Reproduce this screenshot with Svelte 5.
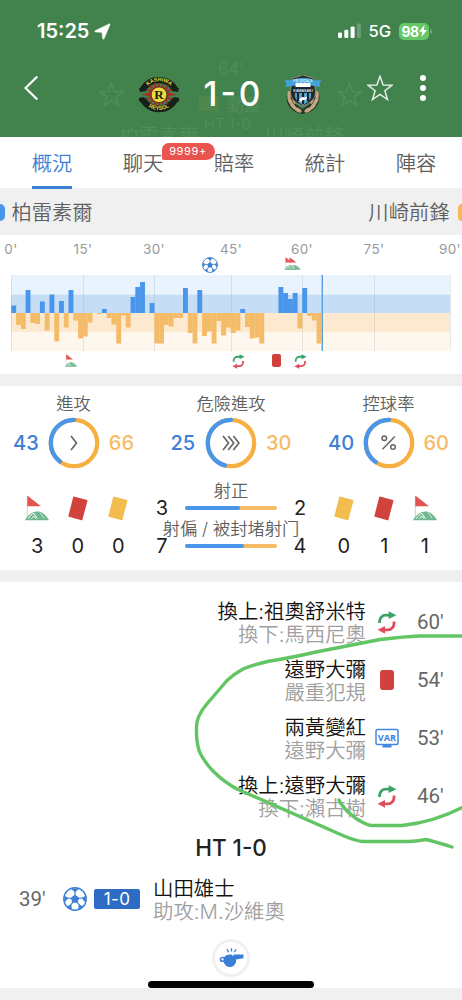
<script lang="ts">
  type Icon = 'sub' | 'red' | 'var';

  interface MatchEvent {
    title: string;
    detail: string;
    icon: Icon;
    minute: number;
  }

  const tabs = ['概況', '聊天', '賠率', '統計', '陣容'];
  let active = $state('概況');

  // x positions of the gridlines; the first half includes added time
  const ticks = [
    { label: "0'", x: 0 },
    { label: "15'", x: 72 },
    { label: "30'", x: 143 },
    { label: "45'", x: 220 },
    { label: "60'", x: 291 },
    { label: "75'", x: 363 },
    { label: "90'", x: 439 }
  ];

  // one value per minute, positive = home pressure, negative = away
  const momentum = [
    7.5, -12, -16, 23, -10, -11, 11.5, -17.5, 18.5, -28.5, 12, -14.5, 23, -7.5, -25.5,
    -23.5, -9.5, 0, -1, 4, -5, -11.5, -30.5, -2.5, -14.5, 16, 26, 31, 0, 10,
    -30.5, -30.5, -12, -13.5, -5, -5, 25, -20, -30.5, 23, -23, -18.5, -30.5, -8, -22.5,
    -14.5, -20, -17.5, 4, -14, -25.5, -24.5, -30.5, 0, 0, 0, 26, 20, 14, 20,
    -15.5, 25, -3, -7.5, -30.5
  ];
  const barWidth = 4.77;

  const rings = [
    { label: '進攻', home: 43, away: 66, symbol: '1' },
    { label: '危險進攻', home: 25, away: 30, symbol: '3' },
    { label: '控球率', home: 40, away: 60, symbol: '%' }
  ];

  const shots = [
    { label: '射正', home: 3, away: 2 },
    { label: '射偏 / 被封堵射门', home: 7, away: 4 }
  ];

  const homeCards = [
    { kind: 'corner', count: 3 },
    { kind: 'red', count: 0 },
    { kind: 'yellow', count: 0 }
  ];
  const awayCards = [
    { kind: 'yellow', count: 0 },
    { kind: 'red', count: 1 },
    { kind: 'corner', count: 1 }
  ];

  const events: MatchEvent[] = [
    { title: '換上:祖奧舒米特', detail: '換下:馬西尼奧', icon: 'sub', minute: 60 },
    { title: '遠野大彌', detail: '嚴重犯規', icon: 'red', minute: 54 },
    { title: '兩黃變紅', detail: '遠野大彌', icon: 'var', minute: 53 },
    { title: '換上:遠野大彌', detail: '換下:瀨古樹', icon: 'sub', minute: 46 }
  ];

  const circumference = 2 * Math.PI * 23.2;
</script>

{#snippet ball(size: number)}
  <svg width={size} height={size} viewBox="0 0 24 24">
    <circle cx="12" cy="12" r="11.2" fill="#fff" stroke="#3b7fd6" stroke-width="1.4" />
    <g fill="#3b7fd6">
      <path d="M12 7.8l4.2 3-1.6 4.9H9.4l-1.6-4.9z" />
      <path d="M7.6 1.6h8.8L12 5.2zM22.9 8.4l-.3 7.4-4-4.8zM1.1 8.4l.3 7.4 4-4.800zM20.600 19.200l-5.600 3.600.8-5.300zM3.400 19.200l5.600 3.600-.8-5.300z" />
    </g>
    <path d="M12 4v5M19.3 11l-4 .5M4.7 11l4 .5M16.5 18.3l-2.5-3.5M7.5 18.3l2.5-3.5" stroke="#3b7fd6" stroke-width="1.2" />
  </svg>
{/snippet}

{#snippet corner(width: number, height: number)}
  <svg {width} {height} viewBox="0 0 24 26">
    <path d="M2.3 1v22" stroke="#d3cfcd" stroke-width="1" />
    <path d="M2.3.5L16 11.2H2.3z" fill="#e25452" />
    <path d="M0 25.3C4 17 16 10.5 24 25.3z" fill="#6fb78e" />
    <path d="M3.5 23.6c1.5-3 3.5-4.7 5.5-5.2l3.5 5.2M6.5 23.6l2.3-2.6 2 2.6" fill="none" stroke="#fff" stroke-width="1" />
    <path d="M15 17.5l4 5.8" stroke="#d6eee0" stroke-width=".9" />
  </svg>
{/snippet}

{#snippet swap(size: number)}
  <svg width={size} height={size * 1.15} viewBox="0 0 20 23">
    <path d="M2.6 12V10A6 6 0 0 1 8.6 4.200H13" fill="none" stroke="#3da268" stroke-width="2.8" />
    <path d="M11.600.3l7.800 3.900L11.600 8z" fill="#3da268" />
    <path d="M17 10.600v2.200a6 6 0 0 1-6 6H7" fill="none" stroke="#dd4f5d" stroke-width="2.8" />
    <path d="M8 14.900v7.800L.6 18.800z" fill="#dd4f5d" />
  </svg>
{/snippet}

{#snippet card(color: string)}
  <svg width="20" height="25" viewBox="0 0 20 25">
    <path d="M6 .6l12.900 3.400q.7.2.5.900L14.400 23.700q-.2.700-.900.500L.9 20.800q-.7-.2-.5-.9L5.200 1.100Q5.400.4 6 .6z" fill={color} />
  </svg>
{/snippet}

{#snippet star(size: number)}
  <svg width={size} height={size} viewBox="0 0 26 26">
    <path d="M13 1.3l3.1 8.7 9.1.2-7.3 5.5 2.6 8.8-7.5-5.2-7.5 5.2 2.6-8.8L.8 10.200l9.100-.2z" fill="none" stroke="currentColor" stroke-width="1.5" />
  </svg>
{/snippet}

{#snippet cardStats(list: { kind: string; count: number }[])}
  <div class="card-stats">
    {#each list as c}
      <div class="card-stat">
        <span class="card-icon">
          {#if c.kind === 'corner'}
            {@render corner(24, 26)}
          {:else}
            {@render card(c.kind === 'red' ? '#d2423c' : '#f2bd4e')}
          {/if}
        </span>
        <span class="count">{c.count}</span>
      </div>
    {/each}
  </div>
{/snippet}

<div class="app">
  <header>
    <div class="ghost">
      <span class="ghost-min">64'</span>
      <span class="ghost-star left">{@render star(25)}</span>
      <span class="ghost-star right">{@render star(25)}</span>
      <span class="ghost-card"></span>
      <span class="ghost-note">動量</span>
      <span class="ghost-ht">HT 1-0</span>
      <span class="ghost-team home">柏雷素爾</span>
      <span class="ghost-team away">川崎前鋒</span>
    </div>

    <div class="status">
      <span class="clock">15:25</span>
      <svg class="location" width="17" height="17" viewBox="0 0 17 17"><path d="M1.200 7.700L15.200.9q1-.3.700.8L10 15.700q-.8 1-1.300-.2L8 9.300 1.500 8.900q-1.300-.3-.3-1.200z" fill="#fff" stroke="#fff" stroke-width=".6" /></svg>
      <svg class="signal" width="24" height="16" viewBox="0 0 24 16">
        <rect x="0" y="9.5" width="4" height="5.5" rx="1.2" fill="#fff" />
        <rect x="6.3" y="6.8" width="4" height="8.2" rx="1.2" fill="#fff" />
        <rect x="12.6" y="3.5" width="4" height="11.5" rx="1.2" fill="#fff" />
        <rect x="18.9" y=".5" width="4" height="14.5" rx="1.2" fill="#6a9d73" />
      </svg>
      <span class="network">5G</span>
      <span class="battery">98<svg width="8" height="12" viewBox="0 0 8 12"><path d="M5.5 0L0 6.800h3.200L2.500 12 8 5H4.800z" fill="#fff" /></svg></span>
      <span class="battery-tip"></span>
    </div>

    <div class="scoreboard">
      <svg class="back" width="15" height="26" viewBox="0 0 15 26"><path d="M13.3 1.5L1.5 13l11.8 11.5" fill="none" stroke="#fff" stroke-width="2.2" /></svg>

      <svg class="crest-home" width="42" height="36" viewBox="0 0 42 36">
        <path d="M1 11l5-1 2 4-6 1zM41 11l-5-1-2 4 6 1zM1 21l5-1 2 5-4 1-3-2zM41 21l-5-1-2 5 4 1 3-2z" fill="#17201a" />
        <path d="M5 13a17 15 0 0 1 32 0M5 22a17 15 0 0 0 32 0" fill="none" stroke="#17201a" stroke-width="6.5" />
        <path d="M21 5l1.700 5 3-4.500.3 5.300 5-3-2.300 4.900 6-.7-4.700 3.300L39 17.800l-9 1.500 4.600 3.700-6-.7 2 4.700-4.600-3-.4 5.500-2.900-4.500L21 31l-1.700-6-2.900 4.500-.4-5.500-4.600 3 2-4.700-6 .7 4.600-3.700-9-1.500 9-2.500L7.300 12l6 .7L11 7.800l5 3 .3-5.300 3 4.500z" fill="#a52c2c" />
        <circle cx="21" cy="17.8" r="7.8" fill="#eedb39" stroke="#272916" stroke-width=".7" />
        <text x="21" y="22.3" text-anchor="middle" font-family="Liberation Serif, serif" font-size="13" font-weight="700" fill="#17201a">R</text>
        <path id="arc-top" d="M7 14a14.5 13.5 0 0 1 28 0" fill="none" />
        <path id="arc-bottom" d="M4.5 22a17 14.5 0 0 0 33 0" fill="none" />
        <text class="crest-name"><textPath href="#arc-top" startOffset="50%" text-anchor="middle">KASHIWA</textPath></text>
        <text class="crest-name"><textPath href="#arc-bottom" startOffset="50%" text-anchor="middle">REYSOL</textPath></text>
      </svg>

      <span class="score">1&#8202;-&#8202;0</span>

      <svg class="crest-away" width="36" height="40" viewBox="0 0 36 40">
        <path d="M3 16C-1 24 3 37 17.500 39 33 37 37 24 33 16l-5 3-3 10-7.500 5-7-5-3-10z" fill="#283331" />
        <g fill="#c7a77e">
          <ellipse cx="4" cy="20" rx="1.8" ry="4" /><ellipse cx="5" cy="26" rx="1.9" ry="4" transform="rotate(-25 5 26)" />
          <ellipse cx="8" cy="31" rx="1.9" ry="4" transform="rotate(-40 8 31)" /><ellipse cx="13" cy="35" rx="1.9" ry="4" transform="rotate(-60 13 35)" />
          <ellipse cx="9" cy="26" rx="1.4" ry="3" transform="rotate(-20 9 26)" />
          <ellipse cx="32" cy="20" rx="1.8" ry="4" /><ellipse cx="31" cy="26" rx="1.9" ry="4" transform="rotate(25 31 26)" />
          <ellipse cx="28" cy="31" rx="1.9" ry="4" transform="rotate(40 28 31)" /><ellipse cx="23" cy="35" rx="1.9" ry="4" transform="rotate(60 23 35)" />
          <ellipse cx="27" cy="26" rx="1.4" ry="3" transform="rotate(20 27 26)" />
        </g>
        <path d="M7 3l5-1 6-2 6 2 5 1 1.500 14c0 7-5 11-12.500 14C10 28 5.500 24 5.500 17z" fill="#22292b" stroke="#a99779" stroke-width=".8" />
        <path d="M10 18h16v4c-1.500 4-4.500 6-8 8-4-2-6.500-4-8-8z" fill="#58a9dd" />
        <path d="M13 18v8M18 18v11M23 18v8" stroke="#18252b" stroke-width="2.2" />
        <path d="M14 25q2-4 6-2.500l2-1-.7 3-4 .7-1 2z" fill="#fff" />
        <path d="M0 5l5 .5Q18 0 31 5.500l5-.5-1.500 4 1 3-4-.5Q18 8 4.500 11.500l-4 .5 1-3z" fill="#42a3df" />
        <text x="18" y="7" text-anchor="middle" class="crest-tiny">FRONTALE</text>
        <path d="M10.500 8.500q2-2 3.500 0 2-2 4 0 2-2 4 0 2-2 3.500 0v3.500h-15z" fill="#fff" />
        <rect x="7.5" y="13" width="21" height="4.5" fill="#1b2428" />
        <text x="18" y="16.7" text-anchor="middle" class="crest-tiny">KAWASAKI</text>
      </svg>

      <span class="favourite">{@render star(26)}</span>
      <span class="dots"><i></i><i></i><i></i></span>
    </div>
  </header>

  <nav>
    {#each tabs as tab}
      <button class:active={active === tab} onclick={() => (active = tab)}>
        <span>{tab}</span>
        {#if tab === '聊天'}<b class="badge">9999+</b>{/if}
      </button>
    {/each}
  </nav>

  <div class="teams">
    <i class="chip home"></i>
    <span>柏雷素爾</span>
    <span class="away-name">川崎前鋒</span>
    <i class="chip away"></i>
  </div>

  <section class="momentum">
    <div class="labels">
      {#each ticks as t}
        <span style="left: {t.x}px">{t.label}</span>
      {/each}
    </div>
    <div class="markers top">
      <span style="left: 190.5px">{@render ball(16)}</span>
      <span style="left: 273px">{@render corner(13, 13)}</span>
      <span style="left: 277px">{@render corner(13, 13)}</span>
    </div>
    <svg class="graph" width="440" height="76" viewBox="0 0 440 76">
      <rect y="0" width="439" height="19.5" fill="#e9f3fd" />
      <rect y="19.5" width="439" height="18.5" fill="#c6ddf6" />
      <rect y="38" width="439" height="19.3" fill="#fce9cf" />
      <rect y="57.3" width="439" height="18.7" fill="#fdf7ed" />
      {#each ticks as t}
        <path d="M{t.x + 0.5} 0v76" stroke="#8b9aaa" stroke-opacity=".22" />
      {/each}
      {#each momentum as v, i}
        <rect
          x={i * barWidth + 0.3}
          y={v > 0 ? 38 - v : 38}
          width={barWidth + 0.1}
          height={Math.abs(v)}
          fill={v > 0 ? '#4996ea' : '#f4bc68'}
        />
      {/each}
      <path d="M311.3 0v76" stroke="#5a9fdf" stroke-width="1.4" />
    </svg>
    <div class="markers bottom">
      <span style="left: 54px">{@render corner(12, 13)}</span>
      <span style="left: 220.5px">{@render swap(13)}</span>
      <span style="left: 260.5px"><i class="red-card small"></i></span>
      <span style="left: 282.5px">{@render swap(13)}</span>
    </div>
  </section>

  <section class="stats">
    <div class="rings">
      {#each rings as r}
        <div class="ring-stat">
          <h4>{r.label}</h4>
          <div class="ring-row">
            <span class="home-num">{r.home}</span>
            <svg width="52" height="52" viewBox="0 0 52 52">
              <circle cx="26" cy="26" r="23.2" fill="none" stroke="#f6b03f" stroke-width="4.3" />
              <circle
                cx="26"
                cy="26"
                r="23.2"
                fill="none"
                stroke="#4996ea"
                stroke-width="4.3"
                stroke-linecap="round"
                stroke-dasharray="{(circumference * r.home) / (r.home + r.away)} {circumference}"
                transform="translate(52 0) scale(-1 1) rotate(-90 26 26)"
              />
              {#if r.symbol === '%'}
                <g fill="none" stroke="#666" stroke-width="1.5">
                  <circle cx="21.3" cy="21.3" r="2.3" />
                  <circle cx="30" cy="30" r="2.3" />
                  <path d="M31.8 19.5L19.5 32.3" />
                </g>
              {:else if r.symbol === '1'}
                <path d="M23 19l5.5 7-5.5 7" fill="none" stroke="#666" stroke-width="1.7" />
              {:else}
                <path d="M18 19l5.5 7-5.5 7M23.2 19l5.5 7-5.5 7M28.4 19l5.5 7-5.5 7" fill="none" stroke="#666" stroke-width="1.7" />
              {/if}
            </svg>
            <span class="away-num">{r.away}</span>
          </div>
        </div>
      {/each}
    </div>

    <div class="lower">
      {@render cardStats(homeCards)}
      <div class="shots">
        {#each shots as s}
          <div class="shot">
            <h4>{s.label}</h4>
            <div class="shot-row">
              <span>{s.home}</span>
              <div class="bar"><i style="width: {(s.home / (s.home + s.away)) * 100}%"></i></div>
              <span>{s.away}</span>
            </div>
          </div>
        {/each}
      </div>
      {@render cardStats(awayCards)}
    </div>
  </section>

  <section class="timeline">
    {#each events as e}
      <div class="event">
        <div class="text">
          <strong>{e.title}</strong>
          <small>{e.detail}</small>
        </div>
        <span class="event-icon">
          {#if e.icon === 'sub'}
            {@render swap(20)}
          {:else if e.icon === 'red'}
            <i class="red-card"></i>
          {:else}
            <svg width="24" height="20" viewBox="0 0 24 20">
              <rect x="1" y="1.5" width="22" height="15" rx="1.5" fill="#fff" stroke="#4089e4" stroke-width="1.5" />
              <rect x="7.5" y="17" width="9" height="2.5" fill="#4089e4" />
              <text x="12" y="12.5" text-anchor="middle" font-family="Open Sans, sans-serif" font-size="9.2" font-weight="700" fill="#3b82e0">VAR</text>
            </svg>
          {/if}
        </span>
        <span class="minute">{e.minute}'</span>
      </div>
    {/each}

    <div class="half-time">HT 1-0</div>

    <div class="event goal">
      <span class="minute">39'</span>
      {@render ball(24)}
      <span class="goal-score">1-0</span>
      <div class="text">
        <strong>山田雄士</strong>
        <small>助攻:M.沙維奧</small>
      </div>
    </div>

    <div class="whistle">
      <svg width="25" height="20" viewBox="0 0 25 20">
        <path d="M10 6.5h2.500l1.300 1.600 1.300-1.600H24.500v3.800l-7.500 1.300a6.200 6.200 0 1 1-12.300 2.300Q.6 14.300.6 11.400.9 8.300 5.300 9 7 6.800 10 6.500zM2.200 11.300q.2 1.500 2.300 1v-2q-2.100-.4-2.300 1z" fill="#3a7fd6" />
        <path d="M8 1l1.700 3.300M12.500.2v3.400M17 1.200L15.300 4.300" stroke="#3a7fd6" stroke-width="1.300" />
      </svg>
    </div>
  </section>

  <footer><i></i></footer>

  <!-- freehand marker drawn over the timeline -->
  <svg class="scribble" width="462" height="240" viewBox="0 0 462 240">
    <path d="M464 6H420Q405 6.5 380 9.5L316 22Q290 28 270 31Q252 35 243 39Q234 44 227 50.5L206 75Q196 87 196.5 98Q196 113 200 123Q206 134 213 141Q224 152 237 159L344 206Q355 210.5 362 211.5H410Q418 211 426 209.5Q433 211 452 217" />
    <path d="M339 170C342 177 350 184 356 188.5Q368 196 372 195.5H402C424 193 446 186 464 176.5" />
  </svg>
</div>

<style>
  :global(body) {
    margin: 0;
    background: #fff;
  }

  .app {
    position: relative;
    width: 462px;
    height: 1000px;
    overflow: hidden;
    background: #f0f0f0;
    color: #222;
    font-family: Inter, 'Noto Sans CJK TC', sans-serif;
    font-weight: 350;
  }

  svg {
    display: block;
    flex: none;
  }

  i {
    display: block;
  }

  h4 {
    margin: 0;
    font-weight: 350;
    color: #5f5f5f;
  }

  header {
    position: relative;
    height: 137px;
    overflow: hidden;
    background: #42834d;
    color: #fff;
  }

  .ghost {
    color: #fff;
    opacity: 0.08;
  }

  .ghost span {
    position: absolute;
    white-space: nowrap;
  }

  .ghost-min {
    left: 218px;
    top: 59px;
    font-size: 17px;
  }

  .ghost-star {
    top: 82px;
  }

  .ghost-star.left {
    left: 99px;
  }

  .ghost-star.right {
    left: 337px;
  }

  .ghost-card {
    left: 199px;
    top: 96px;
    width: 20px;
    height: 15px;
    background: #f4bc68;
  }

  .ghost-note {
    left: 227px;
    top: 91px;
    font-size: 17px;
  }

  .ghost-ht {
    left: 204px;
    top: 114px;
    font-size: 15px;
  }

  .ghost-team {
    top: 124px;
    font-size: 20px;
    line-height: 26px;
  }

  .ghost-team.home {
    left: 119px;
  }

  .ghost-team.away {
    left: 264px;
  }

  .status {
    position: relative;
    display: flex;
    align-items: center;
    height: 62px;
    padding: 0 31px 0 37px;
    box-sizing: border-box;
  }

  .clock {
    font-size: 20px;
    font-weight: 600;
  }

  .location {
    margin-left: 5px;
  }

  .signal {
    margin-left: auto;
  }

  .network {
    margin-left: 6px;
    font-size: 16.5px;
    font-weight: 450;
  }

  .battery {
    display: flex;
    align-items: center;
    justify-content: center;
    width: 30px;
    height: 17px;
    margin-left: 8px;
    border-radius: 5px;
    background: #66c766;
    font-size: 14px;
    font-weight: 700;
    letter-spacing: -0.5px;
  }

  .battery-tip {
    width: 2px;
    height: 5px;
    margin: 0 -1px 0 1px;
    border-radius: 0 2px 2px 0;
    background: #73a57a;
  }

  .scoreboard {
    position: relative;
    display: flex;
    align-items: center;
    height: 64px;
    padding-left: 24px;
  }

  .back {
    margin-top: -12px;
  }

  .crest-home {
    margin-left: 99px;
    margin-top: 1px;
  }

  .crest-name {
    font-family: 'Liberation Sans', sans-serif;
    font-size: 5.3px;
    font-weight: 700;
    fill: #e8d83b;
  }

  .crest-tiny {
    font-family: 'Liberation Sans', sans-serif;
    font-size: 3.6px;
    font-weight: 700;
    fill: #d9eaf4;
  }

  .score {
    width: 62px;
    margin-left: 21px;
    font-size: 33.5px;
    font-weight: 500;
    line-height: 40px;
    text-align: center;
    white-space: nowrap;
  }

  .crest-away {
    margin-left: 22px;
    margin-top: 2px;
  }

  .favourite {
    margin: -12px 0 0 46px;
    color: #e4ece2;
  }

  .dots {
    display: flex;
    flex-direction: column;
    gap: 4px;
    margin: -12px 0 0 27px;
  }

  .dots i {
    width: 6px;
    height: 6px;
    border-radius: 50%;
    background: #fff;
  }

  nav {
    display: flex;
    height: 51px;
    padding-left: 6.5px;
    background: #fff;
  }

  nav button {
    position: relative;
    display: flex;
    justify-content: center;
    flex: none;
    width: 91px;
    height: 51px;
    padding: 0;
    border: 0;
    background: none;
    color: #606060;
    font: inherit;
    font-size: 20.3px;
    line-height: 54px;
  }

  nav span {
    height: 49px;
    overflow: hidden;
    border-bottom: 3px solid transparent;
  }

  nav .active {
    color: #3d80d6;
  }

  nav .active span {
    border-color: #3d80d6;
  }

  .badge {
    position: absolute;
    left: 64px;
    top: 6px;
    width: 53px;
    height: 17px;
    border-radius: 7px 9px 9px 2px;
    background: #e9544f;
    color: #fff;
    z-index: 1;
    font-size: 11px;
    font-weight: 400;
    letter-spacing: 0.6px;
    line-height: 17px;
    text-align: center;
  }

  .teams {
    display: flex;
    align-items: center;
    height: 47px;
    color: #5f5f5f;
    font-size: 20.3px;
    line-height: 30px;
  }

  .teams span {
    padding-top: 2px;
  }

  .chip {
    width: 4.5px;
    height: 17px;
    margin-top: 2px;
  }

  .chip.home {
    margin-right: 7px;
    border-radius: 0 5px 5px 0;
    background: #4996ea;
  }

  .chip.away {
    margin-left: 8px;
    border-radius: 5px 0 0 5px;
    background: #f6b85c;
  }

  .away-name {
    margin-left: auto;
  }

  .momentum {
    height: 139px;
    padding-left: 11px;
    box-sizing: border-box;
    background: #fff;
  }

  .labels {
    position: relative;
    height: 22px;
    color: #999;
    font-size: 13.5px;
    font-weight: 400;
    letter-spacing: 0.4px;
    line-height: 28px;
  }

  .labels span {
    position: absolute;
    transform: translateX(-50%);
  }

  .markers {
    position: relative;
  }

  .markers span {
    position: absolute;
  }

  .markers.top {
    height: 18px;
  }

  .markers.bottom span {
    top: 3px;
  }

  .red-card {
    width: 14px;
    height: 20px;
    border-radius: 3px;
    background: #d2423c;
  }

  .red-card.small {
    width: 9px;
    height: 13px;
    border-radius: 2px;
  }

  .stats {
    height: 184px;
    margin-top: 12px;
    background: #fff;
  }

  .rings {
    display: flex;
    justify-content: space-between;
    padding: 5px 13px 0;
  }

  .ring-stat {
    width: 121px;
  }

  .ring-stat h4 {
    font-size: 17.3px;
    line-height: 25px;
    text-align: center;
  }

  .ring-row {
    display: flex;
    align-items: center;
    justify-content: space-between;
    margin-top: 1px;
    font-size: 20px;
    font-weight: 450;
  }

  .home-num {
    color: #3d80d6;
  }

  .away-num {
    color: #f5bb66;
  }

  .lower {
    display: flex;
    justify-content: space-between;
    padding: 6px 17px 0 17px;
  }

  .card-stats {
    display: flex;
    margin-top: 20px;
  }

  .card-stat {
    display: flex;
    flex-direction: column;
    align-items: center;
    width: 40.5px;
  }

  .card-icon {
    display: flex;
    align-items: center;
    height: 26px;
  }

  .count,
  .shot-row {
    color: #222;
    font-size: 20px;
    font-weight: 400;
  }

  .count {
    margin-top: 13px;
    line-height: 24px;
  }

  .shots {
    width: 152px;
    margin-top: 2px;
  }

  .shot {
    height: 38px;
  }

  .shot h4 {
    font-size: 17.3px;
    line-height: 27px;
    text-align: center;
    white-space: nowrap;
  }

  .shot-row {
    display: flex;
    align-items: center;
    justify-content: space-between;
    line-height: 24px;
    margin-top: -8px;
  }

  .shot-row span {
    width: 14px;
    text-align: center;
  }

  .bar {
    width: 92px;
    height: 4px;
    border-radius: 2px;
    background: #f5bb66;
  }

  .bar i {
    height: 4px;
    border-radius: 2px;
    background: #4996ea;
  }

  .timeline {
    height: 406px;
    margin-top: 12px;
    padding-top: 11px;
    box-sizing: border-box;
    background: #fff;
  }

  .event {
    display: flex;
    align-items: center;
    justify-content: flex-end;
    height: 58px;
    padding-right: 14px;
  }

  .text {
    padding-top: 1px;
    text-align: right;
    font-size: 20.4px;
    line-height: 23px;
  }

  .text strong,
  .text small {
    display: block;
    font-size: inherit;
    font-weight: 350;
  }

  .text strong {
    color: #111;
  }

  .text small {
    color: #a0a0a0;
  }

  .event-icon {
    display: flex;
    justify-content: center;
    width: 24px;
    margin: 0 18px 0 9px;
  }

  .minute {
    width: 31px;
    color: #666;
    font-family: Roboto, sans-serif;
    font-size: 20.5px;
    font-weight: 400;
  }

  .half-time {
    height: 45px;
    font-size: 22.5px;
    font-weight: 500;
    line-height: 45px;
    text-align: center;
  }

  .goal {
    justify-content: flex-start;
    padding: 0 0 0 19px;
  }

  .goal .minute {
    width: 44px;
  }

  .goal-score {
    width: 46px;
    height: 20px;
    margin: 0 13px 0 7px;
    border-radius: 2px;
    background: #2e6bc4;
    color: #fff;
    font-size: 17px;
    font-weight: 400;
    letter-spacing: 0.3px;
    line-height: 20px;
    text-align: center;
  }

  .goal .text {
    text-align: left;
  }

  .whistle {
    display: flex;
    align-items: center;
    justify-content: center;
    width: 32px;
    height: 32px;
    margin: 11px auto 0;
    border: 3px solid #f0f1f3;
    border-radius: 50%;
  }

  footer {
    position: relative;
  }

  footer i {
    position: absolute;
    left: 148px;
    top: -7px;
    width: 166px;
    height: 7px;
    border-radius: 4px;
    background: #000;
  }

  .scribble {
    position: absolute;
    left: 0;
    top: 630px;
    pointer-events: none;
  }

  .scribble path {
    fill: none;
    stroke: #62c563;
    stroke-width: 3.4;
    stroke-linecap: round;
    stroke-linejoin: round;
  }
</style>
